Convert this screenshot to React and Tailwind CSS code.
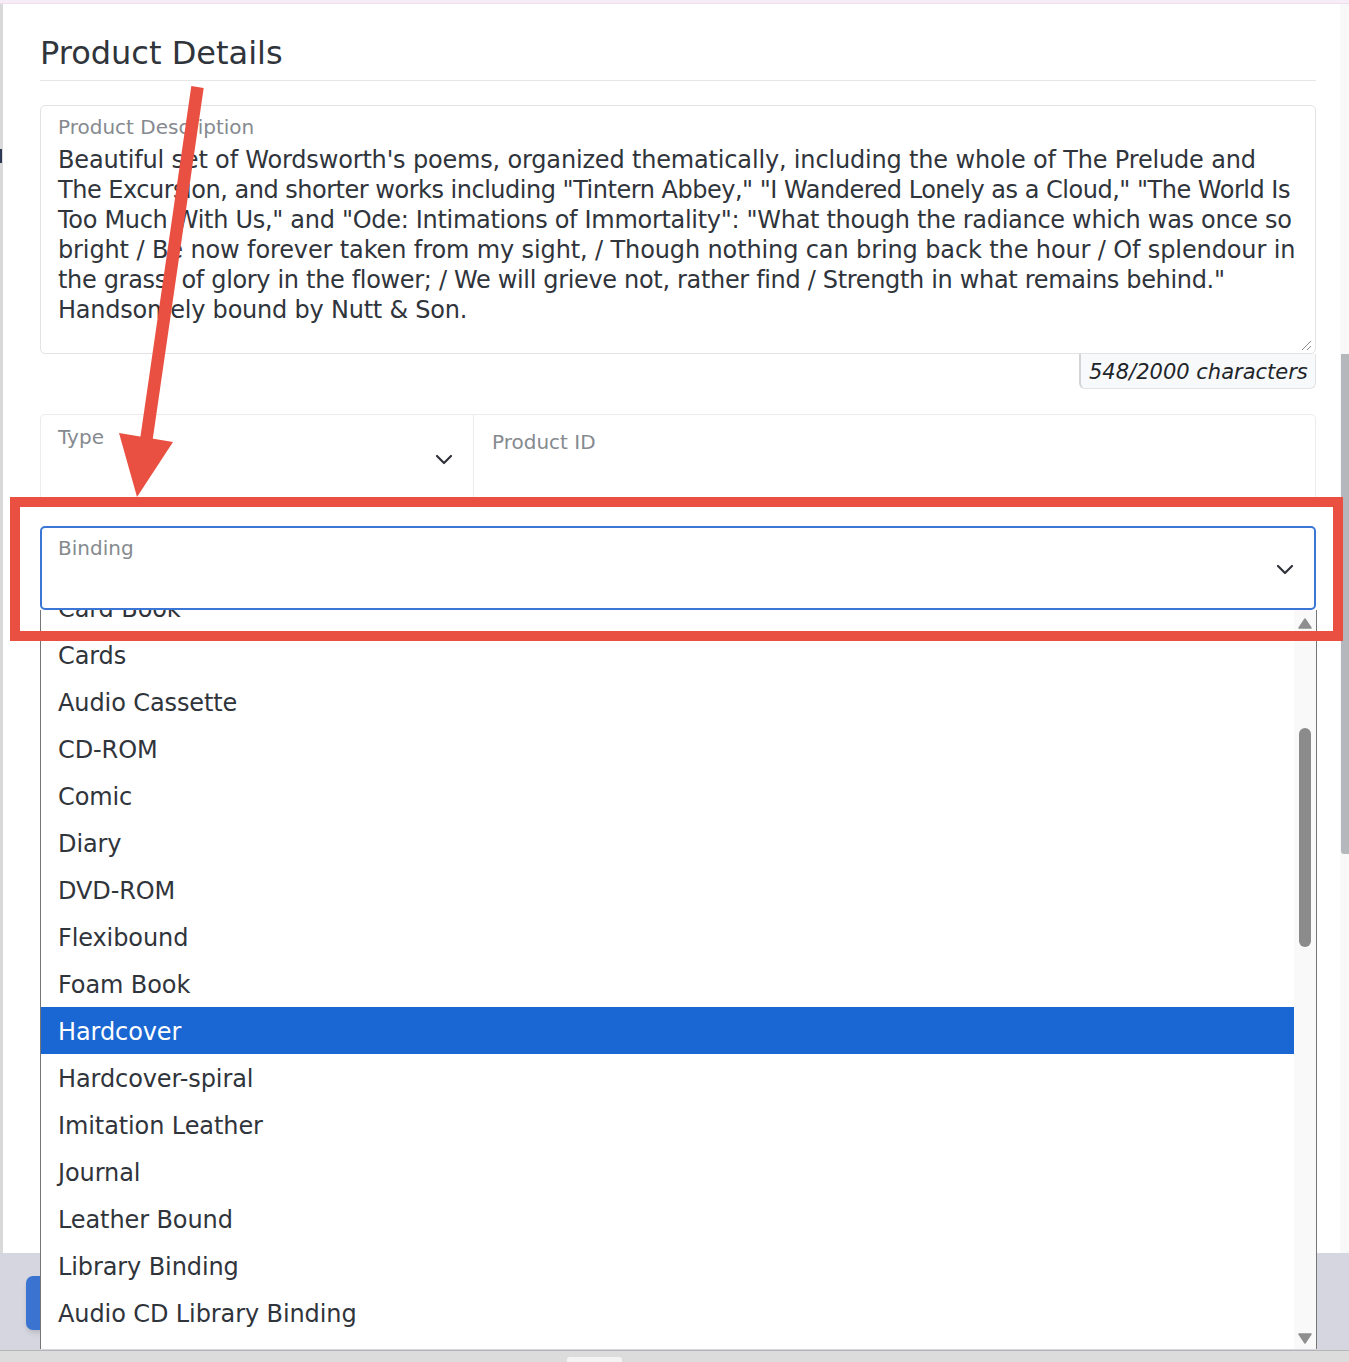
import React from "react";

const lines = [
  ["Beautiful set of Wordsworth's poems, organized thematically, including the whole of The Prelude and", "tracking-[-0.17px]"],
  ['The Excursion, and shorter works including "Tintern Abbey," "I Wandered Lonely as a Cloud," "The World Is', "tracking-[-0.49px]"],
  ['Too Much With Us," and "Ode: Intimations of Immortality": "What though the radiance which was once so', "tracking-[-0.3px]"],
  ["bright / Be now forever taken from my sight, / Though nothing can bring back the hour / Of splendour in", "tracking-[-0.12px]"],
  ['the grass, of glory in the flower; / We will grieve not, rather find / Strength in what remains behind."', "tracking-[-0.33px]"],
  ["Handsomely bound by Nutt & Son.", "tracking-[-0.22px]"],
];

const items = [
  "Card Book",
  "Cards",
  "Audio Cassette",
  "CD-ROM",
  "Comic",
  "Diary",
  "DVD-ROM",
  "Flexibound",
  "Foam Book",
  "Hardcover",
  "Hardcover-spiral",
  "Imitation Leather",
  "Journal",
  "Leather Bound",
  "Library Binding",
  "Audio CD Library Binding",
  "Audio Cassette Library Binding",
];

function Chevron() {
  return (
    <svg width="18" height="11" viewBox="0 0 18 11" fill="none">
      <polyline points="2,2 9,9 16,2" stroke="#2f3338" strokeWidth="2.2" strokeLinecap="round" strokeLinejoin="round" />
    </svg>
  );
}

export default function App() {
  return (
    <div className="relative w-[1349px] h-[1362px] overflow-hidden flex flex-col bg-white font-['DejaVu_Sans',sans-serif] text-[#30343b]">
      {/* top strip */}
      <div className="h-[4px] bg-[#f7edf7] border-b border-[#efdcef]" />

      {/* middle */}
      <div className="flex flex-col h-[1346px]">
        <div className="flex h-[1249px]">
          {/* left backdrop strip */}
          <div className="w-[3px] bg-[#d9d9d9] flex flex-col">
            <div className="h-[145px]" />
            <div className="h-[14px] w-[2px] bg-[#2c3a55]" />
          </div>

          {/* modal content */}
          <div className="w-[1337px] bg-white pl-[37px] flex flex-col">
            <div className="w-[1276px] pt-[29px] pb-[7px] border-b border-[#e6e6e6]">
              <h2 className="text-[32px] leading-[40px] font-medium text-[#30343b]">Product Details</h2>
            </div>

            {/* textarea */}
            <div className="relative w-[1276px] h-[249px] mt-[24px] border border-[#e3e3e3] rounded-[5px] pl-[17px] pr-[18px] pt-[8px]">
              <div className="text-[20px] leading-[24px] text-[#868a8f] relative top-[1px]">Product Description</div>
              <div className="mt-[7px] text-[24px] leading-[30px] whitespace-nowrap">
                {lines.map(([l, t], i) => (
                  <div key={i} className={t}>{l}</div>
                ))}
              </div>
              <svg className="absolute right-[3px] bottom-[2px]" width="12" height="12" viewBox="0 0 12 12">
                <line x1="2" y1="11" x2="11" y2="2" stroke="#8a8a8a" strokeWidth="1" />
                <line x1="7" y1="11" x2="11" y2="7" stroke="#8a8a8a" strokeWidth="1" />
              </svg>
            </div>
            <div className="w-[1276px] flex justify-end">
              <div className="w-[237px] h-[35px] bg-[#f8f9fa] border-l-2 border-b border-r border-l-[#d2d4d7] border-b-[#e3e3e3] border-r-[#e3e3e3] rounded-b-[6px] pl-[8px] flex items-center">
                <span className="italic text-[21px] leading-[26px] text-[#212529] whitespace-nowrap relative top-[1px]">548/2000 characters</span>
              </div>
            </div>

            {/* Type / Product ID */}
            <div className="w-[1276px] h-[84px] mt-[25px] flex">
              <div className="w-[434px] h-full border border-[#ececec] rounded-tl-[5px] pl-[17px] pr-[20px] pt-[10px] flex flex-col">
                <div className="text-[20px] leading-[24px] text-[#868a8f]">Type</div>
                <div className="flex justify-end mt-[5px]">
                  <Chevron />
                </div>
              </div>
              <div className="flex-1 h-full border border-l-0 border-[#ececec] rounded-tr-[5px] pl-[18px] pt-[15px]">
                <div className="text-[20px] leading-[24px] text-[#868a8f]">Product ID</div>
              </div>
            </div>

            {/* Binding */}
            <div className="relative w-[1276px] mt-[28px]">
              <div className="h-[84px] border-2 border-[#3b76d6] rounded-[5px] pl-[16px] pr-[20px] pt-[8px] flex flex-col bg-white">
                <div className="text-[20px] leading-[24px] text-[#868a8f]">Binding</div>
                <div className="flex justify-end mt-[4px]">
                  <Chevron />
                </div>
              </div>

              {/* dropdown list */}
              <div className="absolute left-0 top-full w-[1277px] h-[739px] z-10 bg-white border-x border-[#767676] flex">
                <div className="flex-1 overflow-hidden">
                  <div className="-mt-[26px]">
                    {items.map((it) => (
                      <div
                        key={it}
                        className={
                          it === "Hardcover"
                            ? "h-[47px] leading-[47px] pl-[17px] text-[24px] tracking-[-0.1px] whitespace-nowrap bg-[#1a66d2] text-white"
                            : "h-[47px] leading-[47px] pl-[17px] text-[24px] tracking-[-0.1px] whitespace-nowrap text-[#30343b]"
                        }
                      >
                        <span className="relative top-[2px]">{it}</span>
                      </div>
                    ))}
                  </div>
                </div>
                <div className="w-[22px] bg-[#f9f9f9] flex flex-col items-center pt-[8px] pb-[5px]">
                  <svg width="14" height="11" viewBox="0 0 14 11">
                    <path d="M7 1 L13 10 L1 10 Z" fill="#8f8f8f" stroke="#8f8f8f" strokeWidth="1.5" strokeLinejoin="round" />
                  </svg>
                  <div className="mt-[99px] w-[12px] h-[219px] rounded-full bg-[#8b8b8b]" />
                  <div className="flex-1" />
                  <svg width="14" height="11" viewBox="0 0 14 11">
                    <path d="M1 1 L13 1 L7 10 Z" fill="#8f8f8f" stroke="#8f8f8f" strokeWidth="1.5" strokeLinejoin="round" />
                  </svg>
                </div>
              </div>
            </div>
          </div>

          {/* page scrollbar */}
          <div className="w-[9px] bg-[#f8f8f8] flex flex-col pl-[1px]">
            <div className="h-[350px]" />
            <div className="h-[500px] bg-[#b4b8bc] rounded-bl-[3px]" />
          </div>
        </div>

        {/* footer */}
        <div className="flex-1 bg-[#d6d6e0] pl-[26px] pt-[23px]">
          <div className="w-[140px] h-[54px] rounded-[7px] bg-[#3b73d1] shadow-md" />
        </div>
      </div>

      {/* bottom bar */}
      <div className="h-[12px] bg-[#dcdcdc] border-t border-[#b5b5b5] flex items-end">
        <div className="ml-[567px] w-[55px] h-[5px] bg-[#f3f3f3] rounded-t-[3px]" />
      </div>

      {/* red annotation box */}
      <div className="absolute left-[10px] top-[497px] w-[1333px] h-[144px] border-[10px] border-[#ea5041] z-20 pointer-events-none" />

      {/* red arrow */}
      <svg className="absolute left-[110px] top-[80px] z-20 pointer-events-none" width="100" height="420" viewBox="0 0 100 420">
        <line x1="87.5" y1="7" x2="36" y2="362" stroke="#ea5041" strokeWidth="12.5" />
        <polygon points="27,417 9,353 63,362" fill="#ea5041" />
      </svg>
    </div>
  );
}
